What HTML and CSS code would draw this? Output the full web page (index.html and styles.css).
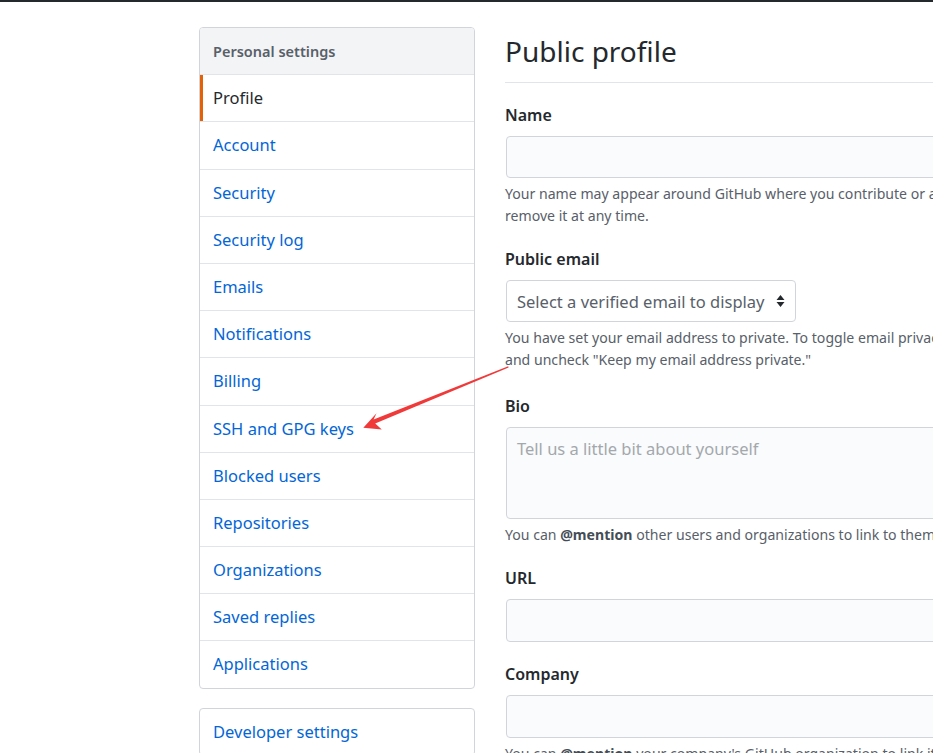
FILE: index.html
```html
<!DOCTYPE html>
<html lang="en">
<head>
<meta charset="utf-8">
<title>Public profile</title>
<link rel="stylesheet" href="styles.css">
</head>
<body>
<div class="topbar"></div>
<div class="layout">
  <aside class="side">
    <nav class="menu">
      <div class="menu-head">Personal settings</div>
      <a class="menu-item selected">Profile</a>
      <a class="menu-item">Account</a>
      <a class="menu-item">Security</a>
      <a class="menu-item">Security log</a>
      <a class="menu-item">Emails</a>
      <a class="menu-item">Notifications</a>
      <a class="menu-item">Billing</a>
      <a class="menu-item">SSH and GPG keys</a>
      <a class="menu-item">Blocked users</a>
      <a class="menu-item">Repositories</a>
      <a class="menu-item">Organizations</a>
      <a class="menu-item">Saved replies</a>
      <a class="menu-item">Applications</a>
    </nav>
    <nav class="menu">
      <a class="menu-item first">Developer settings</a>
    </nav>
  </aside>
  <main class="main">
    <h2 class="subhead">Public profile</h2>
    <div class="group">
      <label class="label">Name</label>
      <div class="input"></div>
      <p class="note">Your name may appear around GitHub where you contribute or are mentioned. You can<br>remove it at any time.</p>
    </div>
    <div class="group email">
      <label class="label">Public email</label>
      <div class="select">Select a verified email to display
        <svg class="caret" width="9" height="14" viewBox="0 0 9 14"><path d="M4.5 1 L8.5 6 H0.5 Z M4.5 13 L8.5 8 H0.5 Z" fill="#24292e"/></svg>
      </div>
      <p class="note">You have set your email address to private. To toggle email privacy, go to email settings<br>and uncheck "Keep my email address private."</p>
    </div>
    <div class="group">
      <label class="label">Bio</label>
      <div class="input textarea"><span class="placeholder">Tell us a little bit about yourself</span></div>
      <p class="note">You can <b>@mention</b> other users and organizations to link to them.</p>
    </div>
    <div class="group">
      <label class="label">URL</label>
      <div class="input tall"></div>
    </div>
    <div class="group">
      <label class="label">Company</label>
      <div class="input tall"></div>
      <p class="note">You can <b>@mention</b> your company's GitHub organization to link it.</p>
    </div>
  </main>
</div>
<svg class="arrow" width="933" height="753" viewBox="0 0 933 753">
  <polygon points="363.3,427.8 376.5,413.3 373.6,419.6 508.2,366.2 508.6,367.4 375.2,423.6 381.8,429.6" fill="#f03a3a"/>
</svg>
</body>
</html>
```
FILE: styles.css
```css
html, body {
  margin: 0;
  padding: 0;
  overflow: hidden;
  background: #fff;
  height: 753px;
}
body {
  font-family: "Noto Sans", "Open Sans", sans-serif;
  color: #24292e;
  position: relative;
}
.topbar {
  height: 2px;
  background: #24292e;
}
.layout {
  display: flex;
  align-items: flex-start;
  padding-left: 199px;
  padding-top: 25px;
  gap: 31px;
  width: 1400px;
}
.side {
  width: 276px;
  flex: none;
  display: flex;
  flex-direction: column;
  gap: 19px;
}
.menu {
  border: 1px solid #d1d5da;
  border-radius: 4px;
  background: #fff;
  overflow: hidden;
}
.menu-head {
  height: 46.2px;
  box-sizing: border-box;
  background: #f3f4f6;
  padding-left: 13px;
  font-size: 14.5px;
  font-weight: 600;
  color: #586069;
  line-height: 46.2px;
}
.menu-item {
  display: block;
  box-sizing: border-box;
  height: 47.2px;
  border-top: 1px solid #e1e4e8;
  padding-left: 13px;
  line-height: 46px;
  font-size: 16.5px;
  color: #0366d6;
  text-decoration: none;
  position: relative;
}
.menu-item.first {
  border-top: 0;
  height: 46px;
}
.menu-item.selected {
  color: #24292e;
}
.menu-item.selected::before {
  content: "";
  position: absolute;
  left: 0;
  top: 0;
  bottom: 0;
  width: 3px;
  background: #e36209;
}
.main {
  width: 760px;
  flex: none;
}
.subhead {
  margin: 0 0 0 -1px;
  font-size: 28px;
  font-weight: 400;
  line-height: 48px;
  padding-bottom: 7px;
  border-bottom: 1px solid #e1e4e8;
}
.group {
  margin-top: 18px;
}
.group.email {
  padding-bottom: 3px;
}
.label {
  display: block;
  font-size: 16px;
  font-weight: 600;
  line-height: 28px;
  margin-bottom: 7px;
  margin-left: -1px;
}
.input {
  height: 42px;
  box-sizing: border-box;
  background: #fafbfc;
  border: 1px solid #d1d5da;
  border-radius: 4px;
}
.input.tall {
  height: 43px;
}
.textarea {
  height: 92px;
  padding: 8px 10px;
}
.placeholder {
  font-size: 16.5px;
  color: #a3a8ad;
  line-height: 26px;
}
.select {
  display: inline-flex;
  align-items: center;
  height: 42px;
  box-sizing: border-box;
  width: 290px;
  padding: 0 10px;
  border: 1px solid #d1d5da;
  border-radius: 4px;
  background: #fff;
  font-size: 16.5px;
  color: #586069;
  justify-content: space-between;
}
.caret {
  flex: none;
}
.note {
  margin: 5px 0 0 -1px;
  font-size: 14.1px;
  line-height: 22px;
  color: #586069;
  white-space: nowrap;
}
.note b {
  color: #444d56;
  font-weight: 700;
}
.arrow {
  position: absolute;
  left: 0;
  top: 0;
  pointer-events: none;
}
```
